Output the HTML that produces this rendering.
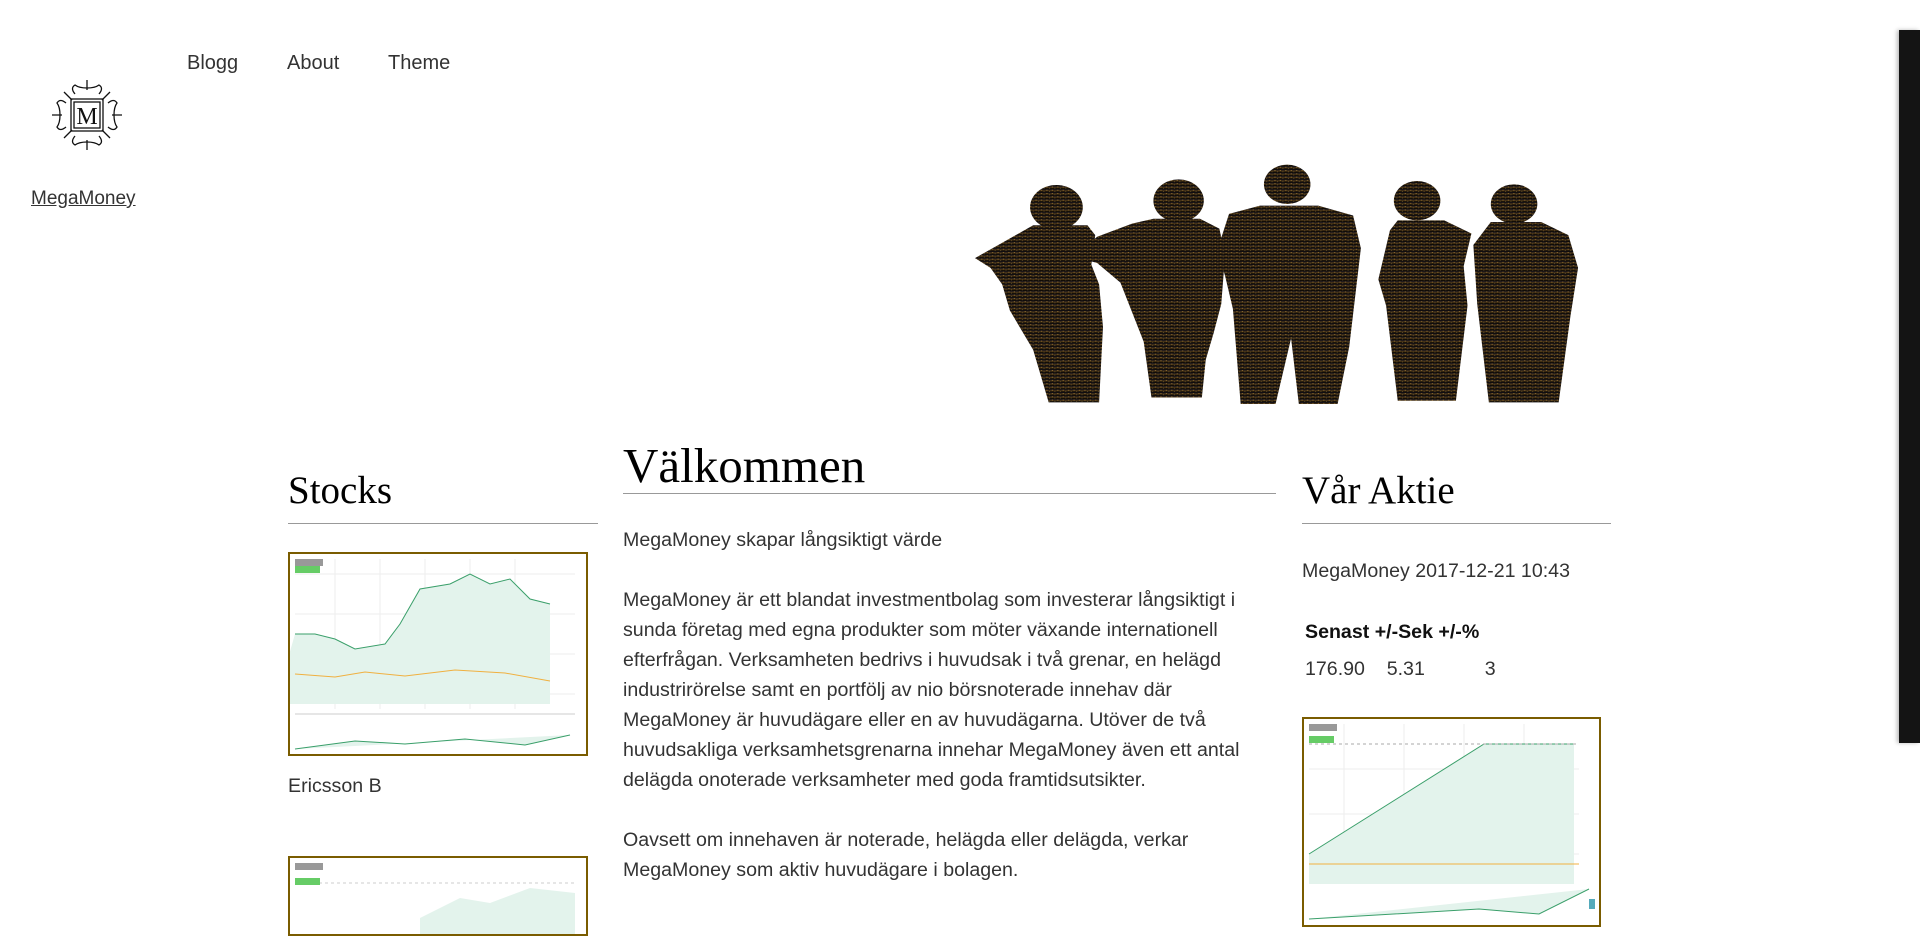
<!DOCTYPE html>
<html><head><meta charset="utf-8"><style>
*{margin:0;padding:0;box-sizing:border-box}
body{width:1920px;height:915px;overflow:hidden;background:#fff;font-family:"Liberation Sans",sans-serif;color:#222;position:relative}
.a{position:absolute}
.nav{font-size:20px;color:#333;font-weight:300;top:52px}
.t{font-size:19.6px;line-height:30px;color:#333}
h2{position:absolute;font-family:"Liberation Serif",serif;font-weight:normal;color:#000}
.hr{position:absolute;height:1px;background:#999}
.chart{position:absolute;border:2px solid #7a5c00;background:#fff;overflow:hidden}
</style></head><body>
<svg class="a" style="left:50px;top:78px" width="74" height="74" viewBox="0 0 74 74">
<g fill="none" stroke="#111" stroke-width="1.3">
<rect x="21" y="21" width="32" height="32"/><rect x="24" y="24" width="26" height="26"/>
<path d="M37 2v10M37 62v10M2 37h10M62 37h10M14 14l8 8M60 14l-8 8M14 60l8-8M60 60l-8-8"/>
<path d="M25 16q-5-6 0-9q4 3 12 3q8 0 12-3q5 3 0 9M25 58q-5 6 0 9q4-3 12-3q8 0 12 3q5-3 0-9M16 25q-6-5-9 0q3 4 3 12q0 8-3 12q3 5 9 0M58 25q6-5 9 0q-3 4-3 12q0 8 3 12q-3 5-9 0"/>
</g>
<text x="37" y="46" text-anchor="middle" font-family="Liberation Serif,serif" font-size="24" fill="#111">M</text>
</svg>
<div class="a" style="left:31px;top:188px;font-size:19px;color:#333;text-decoration:underline">MegaMoney</div>
<div class="a nav" style="left:187px">Blogg</div>
<div class="a nav" style="left:287px">About</div>
<div class="a nav" style="left:388px">Theme</div>

<svg class="a" style="left:975px;top:163px" width="605" height="241" viewBox="0 0 1560 735" preserveAspectRatio="none">
<defs><linearGradient id="g" x1="0" y1="0" x2="0" y2="1">
<stop offset="0" stop-color="#0c0c1c"/><stop offset=".3" stop-color="#3a2c1c"/><stop offset=".5" stop-color="#4a3414"/><stop offset=".7" stop-color="#1a130a"/><stop offset="1" stop-color="#030303"/></linearGradient>
<pattern id="p" width="14" height="10" patternUnits="userSpaceOnUse"><rect width="14" height="10" fill="url(#g)"/><rect x="2" y="2" width="3" height="2" fill="#e8b040" opacity=".7"/><rect x="9" y="6" width="2" height="2" fill="#ffd070" opacity=".5"/></pattern></defs>
<g fill="url(#p)">
<circle cx="210" cy="135" r="68"/>
<path d="M150 190h140l20 30l-10 90l20 60l10 130l-10 230h-130l-40-160l-60-120l-20-80l-30-50l-40-30l60-40z"/>
<circle cx="525" cy="115" r="65"/>
<path d="M460 170h120l50 30l15 80l-10 150l-20 90l-20 80l-10 115h-130l-20-170l-60-180l-60-60l-60-20l60-60l90-40z"/>
<circle cx="805" cy="65" r="60"/>
<path d="M735 130h150l90 30l20 100l-20 200l-10 100l-30 175h-100l-20-200l-40 200h-90l-20-290l-20-100l-20-80l30-110z"/>
<circle cx="1140" cy="115" r="60"/>
<path d="M1090 175h120l70 40l-20 100l10 120l-30 290h-150l-30-290l-20-80l30-150z"/>
<circle cx="1390" cy="125" r="60"/>
<path d="M1330 180h130l70 40l25 100l-20 150l-30 260h-180l-30-300l-10-180z"/>
</g></svg>

<h2 style="left:288px;top:468px;font-size:39px">Stocks</h2>
<div class="hr" style="left:288px;top:523px;width:310px"></div>
<div class="chart" style="left:288px;top:552px;width:300px;height:204px">
<svg width="296" height="200" viewBox="0 0 296 200"><g stroke="#eee"><path d="M5 20h280M5 60h280M5 100h280M5 140h280M45 5v150M90 5v150M135 5v150M180 5v150M225 5v150"/></g>
<path d="M5 80l20 0l20 5l20 10l30 -5l15-20l20-35l30-5l20-10l20 10l20-5l20 20l20 5v100h-275z" fill="#e3f3ec"/>
<path d="M5 80l20 0l20 5l20 10l30 -5l15-20l20-35l30-5l20-10l20 10l20-5l20 20l20 5" fill="none" stroke="#3a9f6a"/>
<path d="M5 120l40 3l30-5l40 4l50-6l50 3l45 8" fill="none" stroke="#f0b040"/>
<rect x="5" y="5" width="28" height="7" fill="#999"/><rect x="5" y="12" width="25" height="7" fill="#6c6"/>
<path d="M5 160h280" stroke="#ccc"/><path d="M5 195l60-8l50 3l60-5l60 6l45-10" fill="#e3f3ec" stroke="#3a9f6a"/></svg></div>
<div class="a t" style="left:288px;top:771px">Ericsson B</div>
<div class="chart" style="left:288px;top:856px;width:300px;height:80px"><svg width="296" height="80"><path d="M5 25h280" stroke="#ccc" stroke-dasharray="3"/><rect x="5" y="5" width="28" height="7" fill="#999"/><rect x="5" y="20" width="25" height="7" fill="#6c6"/><path d="M130 60l40-20l30 5l40-15l45 5v80h-155z" fill="#e3f3ec"/></svg></div>

<h2 style="left:623px;top:437px;font-size:49px">Välkommen</h2>
<div class="hr" style="left:623px;top:493px;width:653px"></div>
<div class="a t" style="left:623px;top:525px;width:655px">MegaMoney skapar långsiktigt värde<br><br>MegaMoney är ett blandat investmentbolag som investerar långsiktigt i sunda företag med egna produkter som möter växande internationell efterfrågan. Verksamheten bedrivs i huvudsak i två grenar, en helägd industrirörelse samt en portfölj av nio börsnoterade innehav där MegaMoney är huvudägare eller en av huvudägarna. Utöver de två huvudsakliga verksamhetsgrenarna innehar MegaMoney även ett antal delägda onoterade verksamheter med goda framtidsutsikter.<br><br>Oavsett om innehaven är noterade, helägda eller delägda, verkar MegaMoney som aktiv huvudägare i bolagen.</div>

<h2 style="left:1302px;top:468px;font-size:39px">Vår Aktie</h2>
<div class="hr" style="left:1302px;top:523px;width:309px"></div>
<div class="a t" style="left:1302px;top:556px">MegaMoney 2017-12-21 10:43</div>
<div class="a t" style="left:1305px;top:617px;font-weight:bold;color:#111">Senast +/-Sek +/-%</div>
<div class="a t" style="left:1305px;top:654px">176.90 &nbsp;&nbsp;&nbsp;5.31 &nbsp;&nbsp;&nbsp;&nbsp;&nbsp;&nbsp;&nbsp;&nbsp;&nbsp;&nbsp;3</div>
<div class="chart" style="left:1302px;top:717px;width:299px;height:210px">
<svg width="295" height="206"><g stroke="#eee"><path d="M5 50h270M5 95h270M5 135h270M40 5v160M100 5v160M160 5v160M220 5v160"/></g>
<path d="M5 135l175-110h90v140h-265z" fill="#e3f3ec"/><path d="M5 135l175-110h90" fill="none" stroke="#3a9f6a"/>
<path d="M5 145h270" stroke="#f0b040"/><path d="M5 25h270" stroke="#aaa" stroke-dasharray="3"/>
<rect x="5" y="5" width="28" height="7" fill="#999"/><rect x="5" y="17" width="25" height="7" fill="#6c6"/>
<path d="M5 200l170-10l60 5l50-25" fill="#e3f3ec" stroke="#3a9f6a"/><rect x="285" y="180" width="6" height="10" fill="#5ab"/></svg></div>

<div class="a" style="left:1899px;top:30px;width:21px;height:713px;background:#141414;box-shadow:-2px 0 4px #bbb"></div>
</body></html>
